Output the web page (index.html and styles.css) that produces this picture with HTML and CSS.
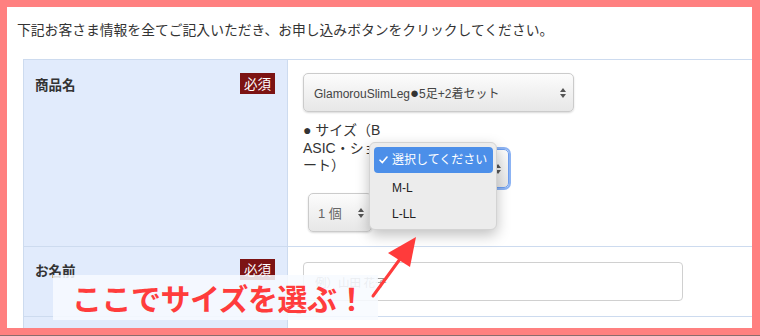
FILE: index.html
```html
<!DOCTYPE html>
<html lang="ja">
  <head>
    <meta charset="utf-8">
    <title>お申し込みフォーム</title>
    <link rel="stylesheet" href="styles.css">
  </head>
  <body>
  <div class="frame">
    <p class="lead">下記お客さま情報を全てご記入いただき、お申し込みボタンをクリックしてください。</p>

    <div class="entry">
      <div class="entry__th">
        <span class="entry__label">商品名</span>
        <span class="req">必須</span>
      </div>
      <div class="entry__td">
        <div class="select select--item">
          <span>GlamorouSlimLeg<span class="dot">●</span>5足+2着セット</span>
          <svg class="select__arrows" width="6" height="10" viewBox="0 0 6 10"><path d="M3 0L6 4H0Z M3 10L0 6H6Z" fill="#555"/></svg>
        </div>
        <div class="option">
          <div class="option__label">● サイズ（B<br>ASIC・ショ<br>ート）</div>
          <div class="select select--size select--focus">
            <span></span>
            <svg class="select__arrows" width="6" height="10" viewBox="0 0 6 10"><path d="M3 0L6 4H0Z M3 10L0 6H6Z" fill="#555"/></svg>
          </div>
        </div>
        <div class="select select--qty">
          <span>1 個</span>
          <svg class="select__arrows" width="6" height="10" viewBox="0 0 6 10"><path d="M3 0L6 4H0Z M3 10L0 6H6Z" fill="#555"/></svg>
        </div>
      </div>

      <div class="entry__th entry__th--name">
        <span class="entry__label">お名前</span>
        <span class="req">必須</span>
      </div>
      <div class="entry__td entry__td--name">
        <input class="input" type="text" placeholder="例）山田 花子">
      </div>

      <div class="entry__th entry__th--last"></div>
      <div class="entry__td entry__td--last"></div>
    </div>

    <!-- 開いているサイズのプルダウン -->
    <ul class="menu">
      <li class="menu__item menu__item--selected">
        <svg class="menu__check" width="9" height="8" viewBox="0 0 9 8"><path d="M1 4.2L3.4 6.6L8 1" fill="none" stroke="#fff" stroke-width="1.6" stroke-linecap="round" stroke-linejoin="round"/></svg>
        選択してください
      </li>
      <li class="menu__item">M-L</li>
      <li class="menu__item">L-LL</li>
    </ul>

    <div class="note">ここでサイズを選ぶ！</div>

    <svg class="pointer" width="65" height="80" viewBox="0 0 65 80">
      <polygon points="56,7 28,23 50,37" fill="#ff3b3b"/>
      <line x1="40" y1="29" x2="13" y2="66" stroke="#ff3b3b" stroke-width="3" stroke-linecap="round"/>
    </svg>
  </div>
</body>
</html>
```

FILE: styles.css
```css
html, body {
  margin: 0;
}

body {
  height: 336px;
  box-sizing: border-box;
  padding: 7px 8px 7px 7px;
  background: #ff8080;
  border-bottom: 1px solid #8c6b6b;
  font-family: "Liberation Sans", "Noto Sans CJK JP", sans-serif;
  color: #333;
}

.frame {
  position: relative;
  height: 321px;
  padding-left: 10px;
  background: #fff;
  overflow: hidden;
}

.lead {
  margin: 0 0 21px;
  padding-top: 13px;
  font-family: "Noto Sans CJK JP", sans-serif;
  font-size: 13.8px;
  line-height: 18px;
  white-space: nowrap;
}

/* フォームの表 */
.entry {
  display: grid;
  grid-template-columns: 264px 480px;
  margin-left: 6px;
  border-top: 1px solid #cddbef;
  border-left: 1px solid #cddbef;
}

.entry__th {
  display: flex;
  justify-content: space-between;
  align-items: flex-start;
  padding: 13px 12px 0 11px;
  background: #e1ebfc;
  border-right: 1px solid #cddbef;
  border-bottom: 1px solid #cddbef;
}
.entry__th--name {
  padding-top: 12px;
}

.entry__label {
  padding-top: 2px;
  font-family: "Noto Sans CJK JP", sans-serif;
  font-size: 13.5px;
  font-weight: bold;
  line-height: 19px;
}

.req {
  padding: 0 4px;
  background: #7c1313;
  color: #fff;
  font-family: "Noto Sans CJK JP", sans-serif;
  font-size: 13.5px;
  line-height: 21px;
}

.entry__td {
  padding: 13px 15px 14px;
  border-bottom: 1px solid #cddbef;
}
.entry__td--name {
  padding: 15px 15px 15px;
}
.entry__th--last, .entry__td--last {
  height: 30px;
  padding: 0;
}

/* プルダウン */
.select {
  display: flex;
  justify-content: space-between;
  align-items: center;
  box-sizing: border-box;
  height: 39px;
  padding: 0 7px 0 10px;
  border: 1px solid #cbcbcb;
  border-radius: 5px;
  background: linear-gradient(#fcfcfc, #e7e7e7);
  box-shadow: 0 1px 2px rgba(0, 0, 0, 0.15);
  font-size: 12px;
  color: #444;
}

.select .dot {
  font-size: 15px;
  line-height: 12px;
  color: #333;
}

.select--item {
  width: 271px;
}

.option {
  display: flex;
  align-items: flex-start;
  margin-top: 10px;
}
.option__label {
  width: 80px;
  font-size: 14px;
  line-height: 17.5px;
  white-space: nowrap;
}

.select--size {
  width: 122px;
  margin: 27px 0 0 4px;
}
.select--focus {
  border-color: #6c9ef0;
  box-shadow: 0 0 0 2px #8db4f4;
}

.select--qty {
  width: 64px;
  margin: 5px 0 0 5px;
  padding-left: 9px;
  font-size: 13px;
  color: #666;
}

.input {
  display: block;
  box-sizing: border-box;
  width: 380px;
  height: 39px;
  margin: 0;
  padding: 0 11px;
  border: 1px solid #d0d0d0;
  border-radius: 4px;
  font: 11.5px "Noto Sans CJK JP", sans-serif;
  color: #333;
}
.input::placeholder {
  color: #999;
}

/* 開いた選択肢 */
.menu {
  position: absolute;
  left: 362px;
  top: 135px;
  box-sizing: border-box;
  width: 128px;
  margin: 0;
  padding: 4px 3px 2px 4px;
  list-style: none;
  background: #ececec;
  border: 1px solid #d3d3d3;
  border-radius: 6px;
  box-shadow: 0 5px 14px rgba(0, 0, 0, 0.25);
  font-size: 12px;
  color: #222;
}

.menu__item {
  position: relative;
  height: 26px;
  line-height: 26px;
  padding-left: 18px;
}
.menu__item--selected {
  margin-bottom: 2px;
  background: #4c8fe9;
  border-radius: 4px;
  color: #fff;
}
.menu__check {
  position: absolute;
  left: 5px;
  top: 9px;
}

/* 注釈 */
.note {
  position: absolute;
  left: 46px;
  top: 268px;
  box-sizing: border-box;
  width: 325px;
  height: 45px;
  padding-left: 19px;
  background: rgba(247, 250, 255, 0.86);
  color: #ff3c3c;
  font-family: "Noto Sans CJK JP", sans-serif;
  font-size: 30px;
  font-weight: bold;
  line-height: 45px;
  letter-spacing: -0.5px;
  white-space: nowrap;
}

.pointer {
  position: absolute;
  left: 353px;
  top: 223px;
}
```
